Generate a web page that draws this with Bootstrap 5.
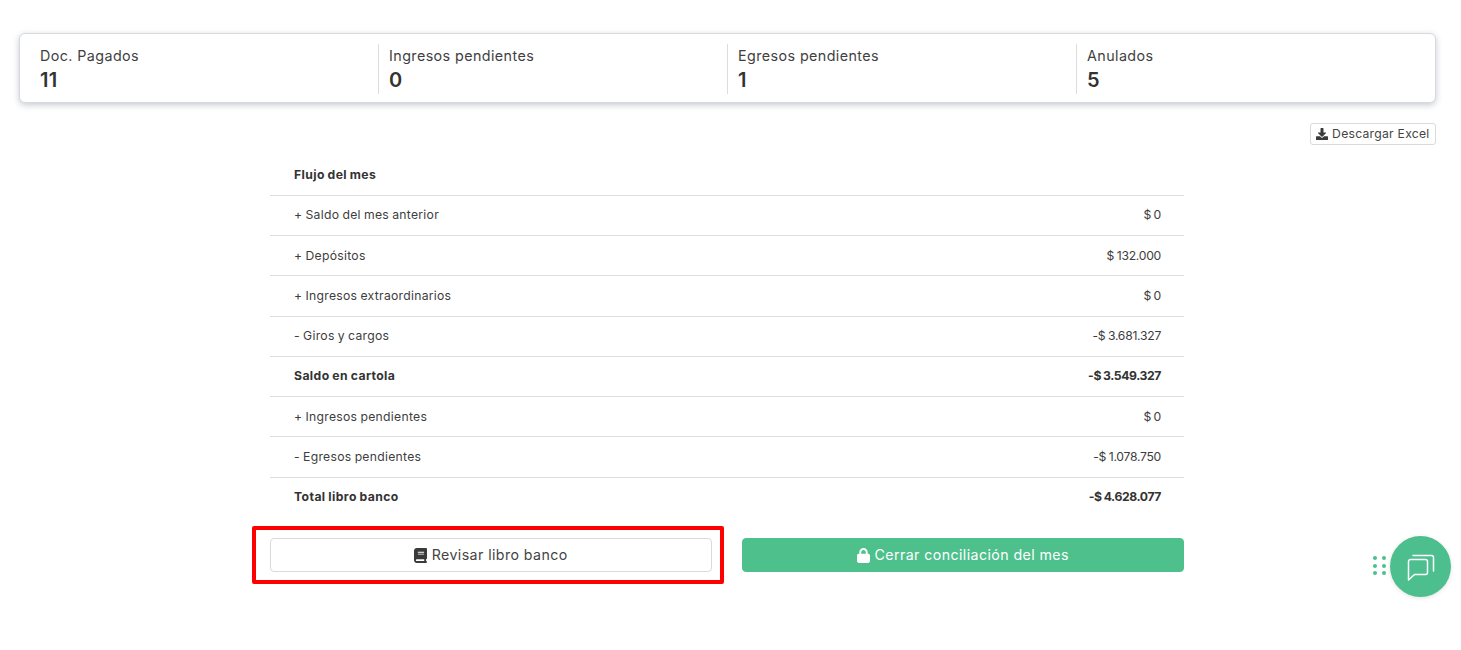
<!DOCTYPE html>
<html lang="es">
<head>
<meta charset="utf-8">
<title>Conciliación</title>
<link href="https://cdn.jsdelivr.net/npm/bootstrap@5.3.0/dist/css/bootstrap.min.css" rel="stylesheet">
<style>
html,body{height:650px;overflow:hidden;background:#fff}
body{font-family:"Inter","Noto Sans","Liberation Sans",sans-serif;color:#3a3a3a}
.page-wrap{padding:33px 25px 0 19px}
.stat-card{height:70px;border:1px solid #d6d9de;border-radius:6px;box-shadow:0 2px 6px rgba(40,50,70,.26);padding:10px 9px}
.stat-col{flex:0 0 349px;padding-left:10px;border-left:1px solid #dcdcdc;height:50px}
.stat-col:first-child{border-left:0;padding-left:11px}
.stat-label{font-size:14.3px;line-height:24px;color:#3f3f3f;letter-spacing:.42px}
.stat-val{font-size:20px;line-height:24px;font-weight:600;color:#333;letter-spacing:.3px}
.excel-row{margin-top:20px;height:22px}
.excel-btn{height:22px;width:126px;padding:0;font-size:12.2px;line-height:20px;color:#444;border:1px solid #d8dadd;border-radius:3px;background:#fff;letter-spacing:.25px}
.excel-btn svg{width:12px;height:12px;vertical-align:-1.5px}
.center-zone{width:914px;margin-left:251px;position:relative}
.flow-table{margin:10px 0 0;font-size:12.2px;color:#3d3d3d;letter-spacing:.27px;word-spacing:-.5px}
.flow-table td{height:40.25px;padding:.25px 23px 0 24px;vertical-align:middle;border-bottom:1px solid #dedede;background:transparent;color:#3d3d3d}
.flow-table td.text-end{letter-spacing:-.28px}
.flow-table tr:last-child td{border-bottom:0}
.flow-table .strong-row td{font-weight:700;color:#333;letter-spacing:.4px}
.flow-table .strong-row td.text-end{letter-spacing:-.4px}
.act-row{display:flex;gap:30px;margin-top:21px}
.act-btn{flex:1 1 0;height:33.5px;padding:0;font-size:14.2px;line-height:30px;border-radius:4px;letter-spacing:.42px}
.act-outline{background:#fff;border:1px solid #d8dadd;color:#444}
.act-fill{background:#4dc08c;border:1px solid #4dc08c;color:#fff}
.act-btn svg{width:13px;height:15px;vertical-align:-2.5px}
.red-mark{position:absolute;left:-18.5px;top:370.5px;width:472px;height:58px;border:4px solid #f00;border-radius:2px;pointer-events:none}
.chat-fab{position:absolute;left:1390px;top:536px;width:61px;height:61px;border-radius:50%;background:#4dbf8e;display:flex;align-items:center;justify-content:center;box-shadow:0 1px 4px rgba(0,0,0,.12)}
.chat-dots{position:absolute;left:1373px;top:556px;display:grid;grid-template-columns:5px 5px;gap:3.5px 4px}
.chat-dots i{display:block;width:4px;height:4px;border-radius:50%;background:#4dbf8e}
</style>
</head>
<body>
<div class="page-wrap">
  <div class="stat-card d-flex bg-white">
    <div class="stat-col"><div class="stat-label">Doc. Pagados</div><div class="stat-val">11</div></div>
    <div class="stat-col"><div class="stat-label">Ingresos pendientes</div><div class="stat-val">0</div></div>
    <div class="stat-col"><div class="stat-label">Egresos pendientes</div><div class="stat-val">1</div></div>
    <div class="stat-col"><div class="stat-label">Anulados</div><div class="stat-val">5</div></div>
  </div>
  <div class="excel-row d-flex justify-content-end">
    <button class="btn excel-btn" type="button"><svg viewBox="0 0 512 512" fill="#3a3a3a"><path d="M216 0h80c13 0 24 11 24 24v168h88c18 0 27 21 14 34L270 378c-8 8-20 8-28 0L90 226c-13-13-4-34 14-34h88V24c0-13 11-24 24-24zm296 376v112c0 13-11 24-24 24H24c-13 0-24-11-24-24V376c0-13 11-24 24-24h147l49 49c20 20 52 20 72 0l49-49h147c13 0 24 11 24 24z"/></svg> Descargar Excel</button>
  </div>
  <div class="center-zone">
    <table class="table flow-table">
      <tbody>
        <tr class="strong-row"><td colspan="2">Flujo del mes</td></tr>
        <tr><td>+ Saldo del mes anterior</td><td class="text-end">$ 0</td></tr>
        <tr><td>+ Depósitos</td><td class="text-end">$ 132.000</td></tr>
        <tr><td>+ Ingresos extraordinarios</td><td class="text-end">$ 0</td></tr>
        <tr><td>- Giros y cargos</td><td class="text-end">-$ 3.681.327</td></tr>
        <tr class="strong-row"><td>Saldo en cartola</td><td class="text-end">-$ 3.549.327</td></tr>
        <tr><td>+ Ingresos pendientes</td><td class="text-end">$ 0</td></tr>
        <tr><td>- Egresos pendientes</td><td class="text-end">-$ 1.078.750</td></tr>
        <tr class="strong-row"><td>Total libro banco</td><td class="text-end">-$ 4.628.077</td></tr>
      </tbody>
    </table>
    <div class="act-row">
      <button class="btn act-btn act-outline" type="button"><svg viewBox="0 0 448 512" fill="#3a3a3a"><path d="M96 0C43 0 0 43 0 96v320c0 53 43 96 96 96h320c18 0 32-14 32-32s-14-32-32-32v-64c18 0 32-14 32-32V32c0-18-14-32-32-32H96zm0 384h256v64H96c-18 0-32-14-32-32s14-32 32-32zm32-240c0-9 7-16 16-16h192c9 0 16 7 16 16s-7 16-16 16H144c-9 0-16-7-16-16zm16 48h192c9 0 16 7 16 16s-7 16-16 16H144c-9 0-16-7-16-16s7-16 16-16z"/></svg> Revisar libro banco</button>
      <button class="btn act-btn act-fill" type="button"><svg viewBox="0 0 448 512" fill="#fff"><path d="M144 144v48h160v-48c0-44-36-80-80-80s-80 36-80 80zM80 192v-48C80 64 144 0 224 0s144 64 144 144v48h16c35 0 64 29 64 64v192c0 35-29 64-64 64H64c-35 0-64-29-64-64V256c0-35 29-64 64-64h16z"/></svg> Cerrar conciliación del mes</button>
    </div>
    <div class="red-mark"></div>
  </div>
</div>
<div class="chat-dots"><i></i><i></i><i></i><i></i><i></i><i></i></div>
<div class="chat-fab">
  <svg width="32" height="32" viewBox="0 0 32 32" fill="none" stroke="#fff" stroke-width="1.5" stroke-linejoin="round" stroke-linecap="round"><path d="M3.5 10.5a2 2 0 0 1 2-2h15a2 2 0 0 1 2 2v11a2 2 0 0 1-2 2H9.5l-6 5.5z"/><path d="M8 4.5h18.500a2 2 0 0 1 2 2V20"/></svg>
</div>
<script src="https://cdn.jsdelivr.net/npm/bootstrap@5.3.0/dist/js/bootstrap.bundle.min.js"></script>
</body>
</html>
